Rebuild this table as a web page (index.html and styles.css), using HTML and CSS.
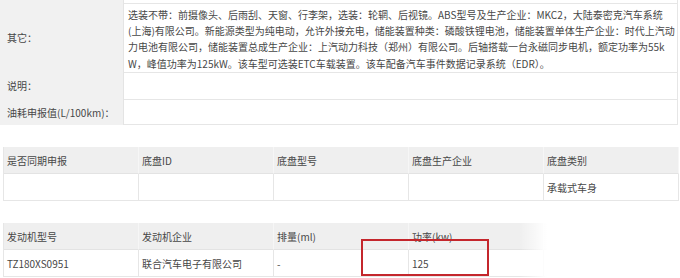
FILE: index.html
```html
<!DOCTYPE html>
<html lang="zh-CN">
<head>
<meta charset="utf-8">
<link rel="stylesheet" href="styles.css">
</head>
<body>
<div class="page">
  <div class="info">
    <div class="lab cut"></div>
    <div class="val cut"></div>
    <div class="lab">其它：</div>
    <div class="val text">选装不带：前摄像头、后雨刮、天窗、行李架，选装：轮辋、后视镜。ABS型号及生产企业：MKC2，大陆泰密克汽车系统<br>(上海)有限公司。新能源类型为纯电动，允许外接充电，储能装置种类：磷酸铁锂电池，储能装置单体生产企业：时代上汽动<br>力电池有限公司，储能装置总成生产企业：上汽动力科技（郑州）有限公司。后轴搭载一台永磁同步电机，额定功率为55k<br>W，峰值功率为125kW。该车型可选装ETC车载装置。该车配备汽车事件数据记录系统（EDR）。</div>
    <div class="lab">说明：</div>
    <div class="val"></div>
    <div class="lab">油耗申报值(L/100km)：</div>
    <div class="val last"></div>
  </div>

  <div class="grid5">
    <div class="hd">是否同期申报</div>
    <div class="hd">底盘ID</div>
    <div class="hd">底盘型号</div>
    <div class="hd">底盘生产企业</div>
    <div class="hd">底盘类别</div>
    <div class="bd"></div>
    <div class="bd"></div>
    <div class="bd"></div>
    <div class="bd"></div>
    <div class="bd">承载式车身</div>
  </div>

  <div class="grid5 engine">
    <div class="hd">发动机型号</div>
    <div class="hd">发动机企业</div>
    <div class="hd">排量(ml)</div>
    <div class="hd">功率(kw)</div>
    <div class="hd"></div>
    <div class="bd">TZ180XS0951</div>
    <div class="bd">联合汽车电子有限公司</div>
    <div class="bd">-</div>
    <div class="bd">125</div>
    <div class="bd"></div>
    <div class="erase"></div>
    <div class="mark"></div>
  </div>
</div>
</body>
</html>
```

FILE: styles.css
```css
html, body {
  margin: 0;
  padding: 0;
  background: #fff;
}
body {
  width: 680px;
  height: 278px;
  overflow: hidden;
  font-family: "Noto Sans CJK SC", "Noto Sans", sans-serif;
  font-size: 10px;
  color: #474747;
}
.page {
  display: flex;
  flex-direction: column;
}
.info {
  display: grid;
  grid-template-columns: 124px 554px;
  grid-template-rows: 3px 69px 27px 26px;
  width: 678px;
}
.lab {
  background: #f1f1f1;
  border-right: 1px solid #e4e4e4;
  box-sizing: border-box;
  display: flex;
  align-items: center;
  padding-left: 7px;
  white-space: nowrap;
}
.val {
  border-top: 1px solid #e6e6e6;
  border-right: 1px solid #e6e6e6;
  box-sizing: border-box;
}
.val.cut {
  border-top: none;
}
.val.last {
  border-bottom: 1px solid #e6e6e6;
}
.text {
  padding: 3px 0 0 4px;
  line-height: 16.2px;
  white-space: nowrap;
}
.grid5 {
  display: grid;
  grid-template-columns: repeat(5, 135px);
  grid-template-rows: 27px 27px;
  margin: 22px 0 0 3px;
  width: 675px;
  border-left: 1px solid #e6e6e6;
  box-sizing: border-box;
  position: relative;
}
.hd, .bd {
  display: flex;
  align-items: center;
  padding-left: 3px;
  box-sizing: border-box;
  white-space: nowrap;
}
.hd {
  background: #efefef;
  border-right: 1px solid #f6f6f6;
  border-bottom: 1px solid #e3e3e3;
}
.bd {
  border-right: 1px solid #e6e6e6;
  border-bottom: 1px solid #e6e6e6;
}
.engine .erase {
  position: absolute;
  left: 515px;
  top: 0;
  width: 160px;
  height: 55px;
  background: linear-gradient(to right, rgba(255,255,255,0) 0, #fff 28px);
}
.engine .mark {
  position: absolute;
  left: 357px;
  top: 16px;
  width: 128px;
  height: 37px;
  border: 2px solid #c4262c;
  box-sizing: border-box;
}
```
